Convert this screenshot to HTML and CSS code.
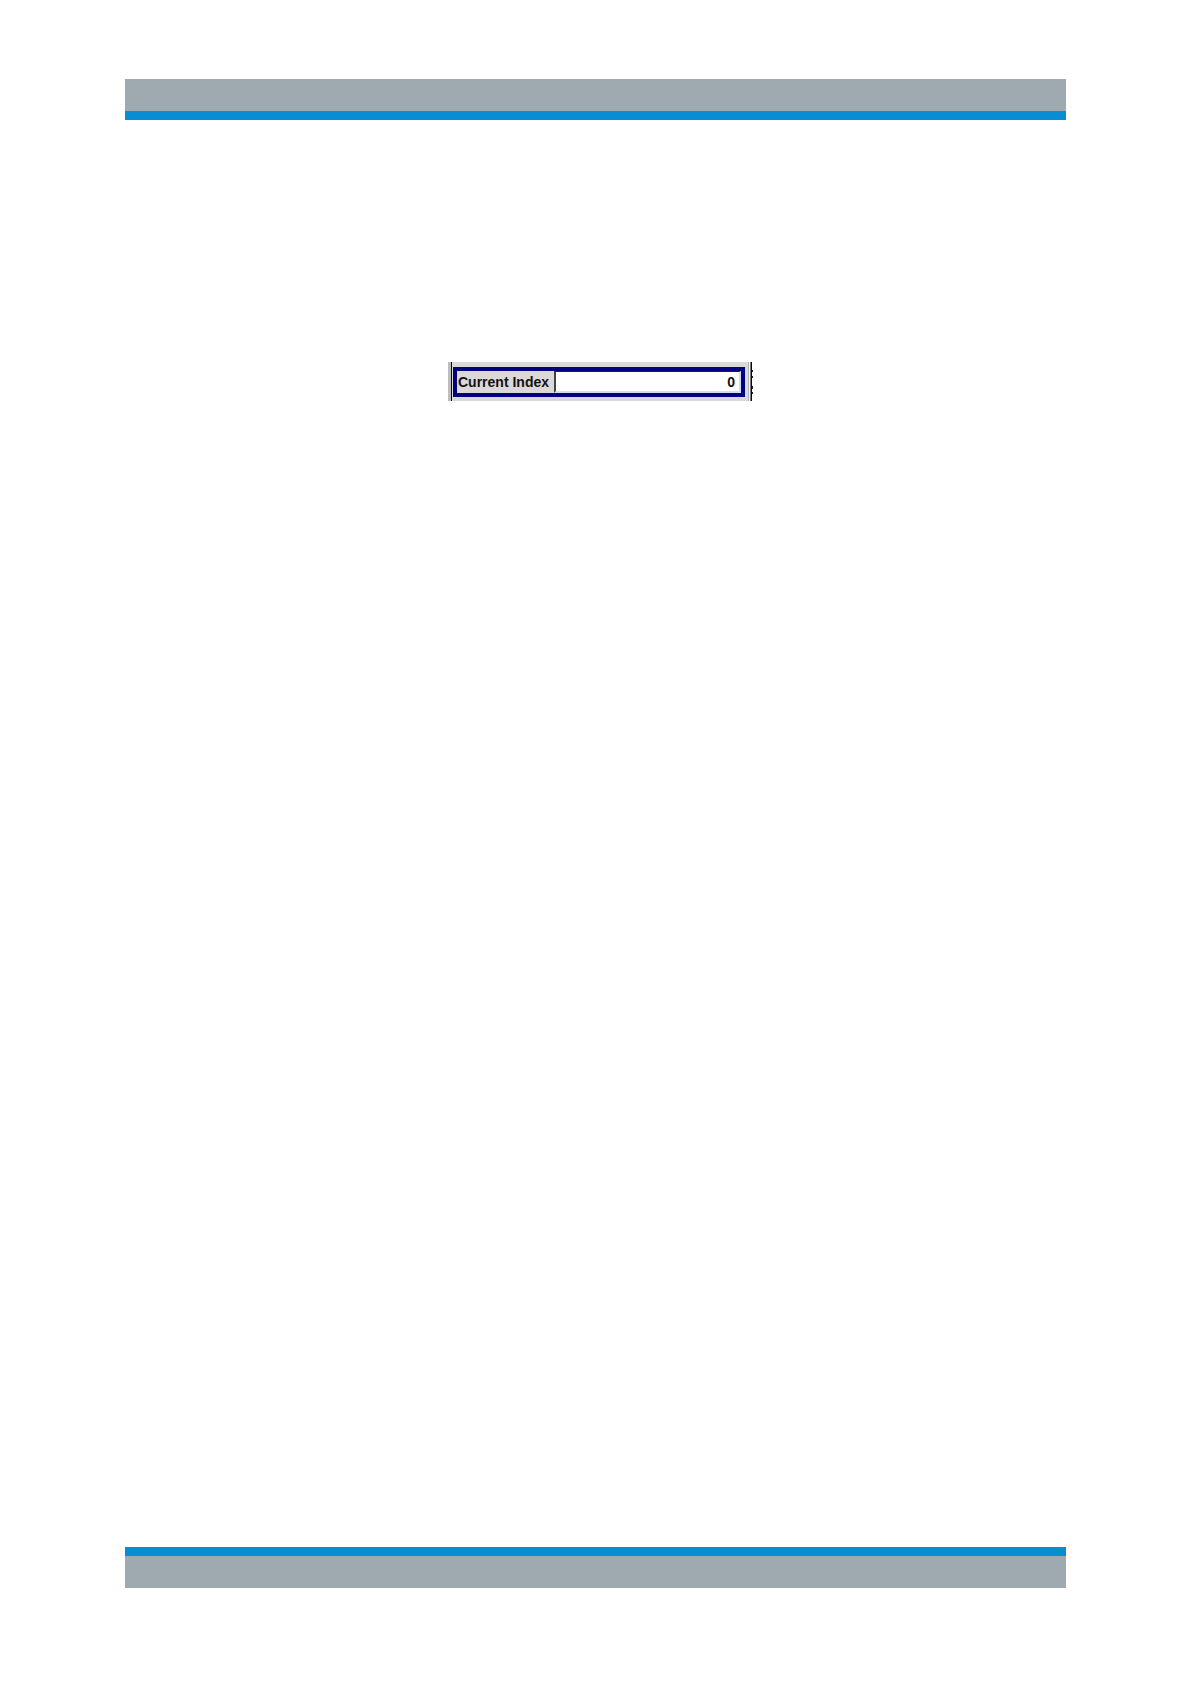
FILE: index.html
```html
<!DOCTYPE html>
<html lang="en">
<head>
  <meta charset="utf-8">
  <meta name="viewport" content="width=device-width, initial-scale=1">
  <title>Current Index</title>
  <link rel="stylesheet" href="styles.css">
</head>
<body class="page">
  <header class="band band-top"></header>
  <main class="content">
    <div class="panel">
      <div class="panel-body">
        <div class="field">
          <label class="field-label" for="current-index">Current Index</label>
          <input class="field-input" id="current-index" type="text" inputmode="numeric" value="0">
        </div>
      </div>
      <svg class="panel-edge" width="8" height="39" viewBox="0 0 8 39" shape-rendering="crispEdges" aria-hidden="true">
        <path fill="#dcdad9" d="M0 0h8v39H0z"/>
        <path fill="#b4b2b4" d="M3 0h1v39H3z"/>
        <path fill="#f6f5f5" d="M4 0h1v39H4z"/>
        <path fill="#77787a" d="M5 0h1v39H5z"/>
        <path fill="#08080a" d="M6 0h1v39H6z"/>
        <path fill="#fff" d="M7 0h1v39H7z"/>
        <path fill="#222" d="M7 8h1v2H7zM7 14h1v2H7zM7 24h1v3H7zM7 30h1v2H7z"/>
      </svg>
    </div>
  </main>
  <footer class="band band-bottom"></footer>
</body>
</html>
```
FILE: styles.css
```css
* {
  box-sizing: border-box;
}

.page {
  display: flex;
  flex-direction: column;
  min-height: 100vh;
  margin: 0;
  padding: 79px 10.5% 96px;
  background: #fff;
  font-family: "Liberation Sans", Arial, sans-serif;
}

.band {
  height: 41px;
  background: #9eaab0;
}

.band-top {
  border-bottom: 9px solid #078dd3;
}

.band-bottom {
  border-top: 9px solid #078dd3;
}

.content {
  display: flex;
  flex: 1;
  align-items: flex-start;
  justify-content: center;
  padding: 242px 0 0 10px;
}

.panel {
  display: flex;
  width: 305px;
  max-width: 100%;
  height: 39px;
}

.panel-body {
  flex: 1;
  min-width: 0;
  padding: 5px 0 4px 1px;
  border-left: 4px solid #08080a;
  border-image: linear-gradient(to right, #bdbcbe 0 3px, #08080a 3px 4px) 0 0 0 4;
  background: #dcd8d7;
}

.panel-edge {
  flex: none;
}

.field {
  display: flex;
  height: 30px;
  border: 4px solid #000080;
  background: #dcd8d7;
}

.field-label {
  flex: none;
  width: 97px;
  padding-left: 1px;
  color: #111;
  font-size: 14px;
  font-weight: bold;
  line-height: 22px;
}

.field-input {
  flex: 1;
  min-width: 0;
  padding: 0 4px 0 0;
  border: 2px solid #d5dcf2;
  border-top: 1px solid #222;
  border-left-color: #444;
  border-radius: 0;
  outline: 0;
  background: #fff;
  color: #111;
  font: bold 14px/18px "Liberation Sans", Arial, sans-serif;
  text-align: right;
}
```
